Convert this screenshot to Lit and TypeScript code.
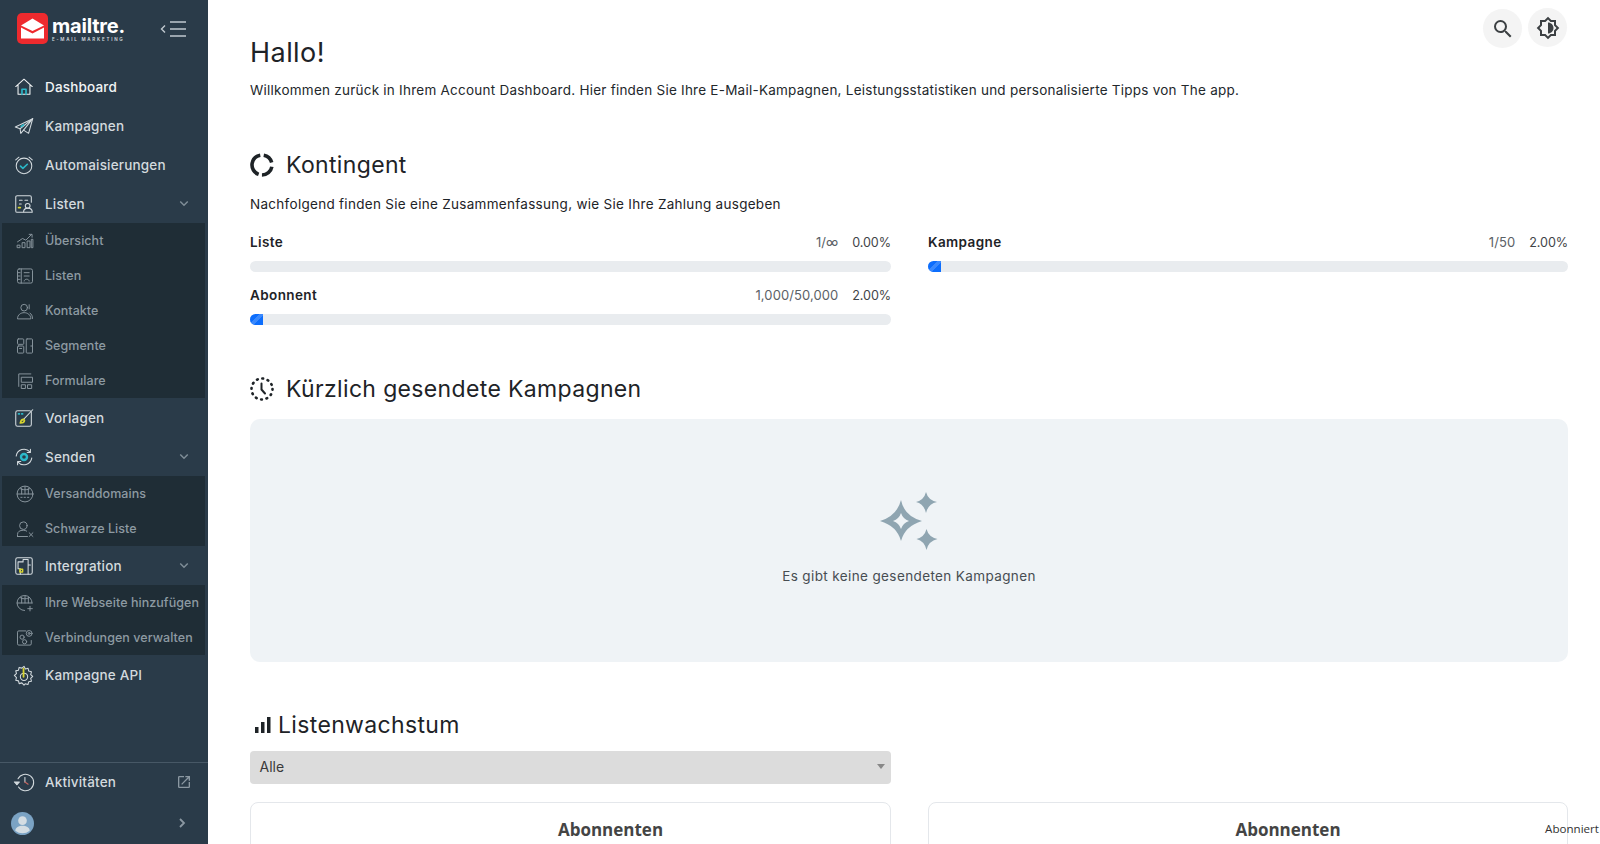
import { LitElement, html, svg, css } from "lit";
import { customElement } from "lit/decorators.js";

const T = "#2bb8c9";
const Y = "#d6d32f";
const icons: Record<string, unknown> = {
  home: svg`<path d="M3 11.5 12 3.5l9 8M5.5 10v10h13V10"/><path d="M9.8 20v-5.5h4.4V20" stroke="${T}" stroke-width="1.8"/>`,
  send: svg`<path d="M2.5 13 21.5 4 17 20l-5.5-3.5L8.5 20l-.8-5z"/><path d="M7.7 15 21.5 4 11.5 16.5"/><path d="M9 12.5l2.5-1.8" stroke="${T}" stroke-width="1.8"/>`,
  alarm: svg`<circle cx="12" cy="13" r="8.5"/><path d="M3 6.5 6.5 3.5M21 6.5l-3.5-3"/><path d="M8.2 13.2l2.6 2.4 4.8-4.4" stroke="${T}" stroke-width="1.8"/>`,
  lists: svg`<path d="M11 21H4.5A1.5 1.5 0 0 1 3 19.500V4.500A1.500 1.500 0 0 1 4.500 3h14A1.500 1.500 0 0 1 20 4.500V10"/><path d="M7 8h3M13 8h3M7 12h2"/><circle cx="16" cy="14" r="2.600"/><path d="M11.500 21c0-6 9.500-6 9.500 0z"/><path d="M6 16h2" stroke="${Y}" stroke-width="1.800"/>`,
  chart: svg`<path d="M3 20h3v-3H3zM9 20h3v-6H9zM15 20h3v-8h-3zM20 20h1.500V10H20zM3 13l6-4 4 2 7-7M17 4h3.500v3.500"/>`,
  listbook: svg`<rect x="3" y="3.500" width="18" height="17" rx="2"/><path d="M7.500 3.500v17M11 8h6M11 12h6M4 8h2M4 12h2M4 16h2M11 18c0-3 6-3 6 0"/>`,
  contact: svg`<circle cx="11" cy="8" r="4"/><path d="M3 21c0-9.500 16-9.500 16 0zM17 4.500v5M21 21c0-3-1-5-3-6.500"/>`,
  segment: svg`<rect x="3" y="3.500" width="7.500" height="6.500" rx="1"/><rect x="3" y="12" width="7.500" height="8.500" rx="1"/><rect x="13.500" y="3.500" width="7.500" height="17" rx="1"/><path d="M5.500 15h2.500M19 12h2"/>`,
  form: svg`<path d="M19 3.500H4.500v15M8 7.500h13v6H8zM8 16.500h4.500v4.500H8zM15.500 16.500H20v4.500h-4.500z"/>`,
  tmpl: svg`<rect x="3" y="4" width="17" height="17" rx="2"/><path d="M21.500 3 11 14"/><path d="M11.500 13.500c-1 0-3 1-3.500 4 3 0 4.500-1.500 4.500-3z" stroke="${Y}" stroke-width="1.800"/><path d="M6 7.500h1M9.500 7.500h1" stroke="${T}" stroke-width="1.800"/>`,
  sendc: svg`<circle cx="12" cy="12" r="3.300" stroke="${T}" stroke-width="2.600"/><path d="M3.500 11A8.600 8.600 0 0 1 18.500 6.500M20.500 13a8.600 8.600 0 0 1-15 4.500"/><path d="M15.500 7h3.500V3.500M8.500 17H5v3.500"/>`,
  domain: svg`<circle cx="12" cy="12" r="9.500"/><path d="M2.500 12h19M6 5.500c0 2 12 2 12 0M8 12V5M12 12V3M16 12V5"/><path d="M7 16h1.500M11 16h1.500M15 16h1.500"/>`,
  block: svg`<circle cx="10" cy="8" r="4.500"/><path d="M3 21v-2.500C3 15 6 13.500 10 13.500c1.500 0 3 .3 4 1M3 21h12M17 16.500l4.500 4.500M21.500 16.500 17 21"/>`,
  integ: svg`<rect x="3" y="3" width="18" height="18" rx="2"/><path d="M8 21v-6H5.500V7.500h5.500V5h5.500v6H19M16.500 11v10"/><rect x="7.500" y="15.500" width="3" height="3" stroke="${Y}" stroke-width="1.600"/>`,
  webadd: svg`<path d="M20.500 12a9 9 0 1 0-9 9M2.500 12h18M6 5.500c0 2 11 2 11 0M8 12V5M12 12V3M16 12V5M18 16v5.500M15.300 18.800h5.500"/>`,
  conn: svg`<path d="M13 3.500H4.500A1.500 1.500 0 0 0 3 5v14a1.500 1.500 0 0 0 1.500 1.500H18a1.500 1.500 0 0 0 1.500-1.500v-4"/><circle cx="17" cy="6.500" r="3.500"/><circle cx="17" cy="6.500" r="1.200"/><circle cx="8.500" cy="11" r="2.500"/><circle cx="11.500" cy="16.500" r="2.500"/>`,
  api: svg`<path d="M12 2.500l1.500 3 3-.8.6 3 3 .8-.8 3 2.200 2-2.200 2.300.8 3-3 .6-.8 3-3-.8L12 23l-2.300-2.400-3 .8-.7-3-3-.6.8-3-2.300-2.300 2.300-2-.8-3 3-.8.7-3 3 .8z"/><circle cx="12" cy="14" r="4"/><path d="M11.500 14V5" stroke="${Y}" stroke-width="2"/>`,
  hist: svg`<path d="M5.500 8.500A9 9 0 1 1 6 17.500"/><path d="M1.500 12H7l-2.700 3z" fill="currentColor"/><path d="M13 7v5" /><path d="M13 12l3.500 2.500" stroke="#c9655f"/>`,
};

const Ico = (n: string) =>
  html`<svg class="ico" viewBox="0 0 24 24" fill="none" stroke="currentColor" stroke-width="1.150" stroke-linecap="round" stroke-linejoin="round">${icons[n]}</svg>`;
const Chev = html`<svg class="chev" viewBox="0 0 12 8" fill="none" stroke="currentColor" stroke-width="1.800"><path d="M1.500 1.500 6 6l4.500-4.500"/></svg>`;

type Item = { icon: string; label: string; arrow?: boolean; active?: boolean; sub?: { icon: string; label: string }[] };
const nav: Item[] = [
  { icon: "home", label: "Dashboard", active: true },
  { icon: "send", label: "Kampagnen" },
  { icon: "alarm", label: "Automaisierungen" },
  {
    icon: "lists",
    label: "Listen",
    arrow: true,
    sub: [
      { icon: "chart", label: "Übersicht" },
      { icon: "listbook", label: "Listen" },
      { icon: "contact", label: "Kontakte" },
      { icon: "segment", label: "Segmente" },
      { icon: "form", label: "Formulare" },
    ],
  },
  { icon: "tmpl", label: "Vorlagen" },
  {
    icon: "sendc",
    label: "Senden",
    arrow: true,
    sub: [
      { icon: "domain", label: "Versanddomains" },
      { icon: "block", label: "Schwarze Liste" },
    ],
  },
  {
    icon: "integ",
    label: "Intergration",
    arrow: true,
    sub: [
      { icon: "webadd", label: "Ihre Webseite hinzufügen" },
      { icon: "conn", label: "Verbindungen verwalten" },
    ],
  },
  { icon: "api", label: "Kampagne API" },
];

const quotas = [
  { label: "Liste", count: "1/∞", pct: "0.00%", fill: 0 },
  { label: "Kampagne", count: "1/50", pct: "2.00%", fill: 2 },
  { label: "Abonnent", count: "1,000/50,000", pct: "2.00%", fill: 2 },
];

@customElement("app-root")
export class AppRoot extends LitElement {
  static styles = css`
    :host {
      display: block;
      height: 844px;
      overflow: hidden;
      font-family: Inter, "Noto Sans", sans-serif;
      color: #1e2327;
      background: #fff;
    }
    .layout { display: flex; height: 844px; }
    .side {
      width: 208px;
      flex: none;
      background: #2a3b49;
      display: flex;
      flex-direction: column;
      color: #d3dade;
    }
    .brand {
      height: 67px;
      flex: none;
      display: flex;
      align-items: flex-start;
      padding: 13px 0 0 17px;
      box-sizing: border-box;
    }
    .logo { width: 31px; height: 31px; flex: none; }
    .word { margin-left: 4px; color: #fff; display: flex; flex-direction: column; }
    .word b { font-size: 20px; line-height: 22px; font-weight: 700; letter-spacing: -0.2px; margin-top: 2px; }
    .word span { font-size: 4.5px; line-height: 6px; letter-spacing: 1.75px; font-weight: 600; color: #d5dbdf; white-space: nowrap; }
    .toggle { margin: 6px 21px 0 auto; width: 27px; height: 20px; color: #c0c9cf; }
    .row {
      height: 39px;
      display: flex;
      align-items: center;
      padding-left: 13px;
      padding-right: 19px;
      gap: 10px;
      font-size: 13.5px;
      font-weight: 500;
      letter-spacing: 0.18px;
      white-space: nowrap;
    }
    .row.on { color: #f1f4f5; }
    .ico { width: 22px; height: 22px; flex: none; }
    .chev { width: 10px; height: 7px; margin-left: auto; color: #7f8d97; }
    .sub {
      background: #1f2d36;
      margin: 0 3px 0 2px;
      color: #8d9aa2;
    }
    .subrow {
      height: 35px;
      display: flex;
      align-items: center;
      padding-left: 12px;
      gap: 10px;
      font-size: 12.5px;
      font-weight: 500;
      white-space: nowrap;
      letter-spacing: 0.05px;
    }
    .subrow .ico { width: 20px; height: 20px; color: #8a979f; margin-left: 1px; }
    .sub-group { display: flex; flex-direction: column; }
    .foot { margin-top: auto; border-top: 1px solid #475866; }
    .foot .row { padding-bottom: 2px; box-sizing: border-box; }
    .foot .ext { width: 16px; height: 16px; margin-left: auto; color: #8b98a2; margin-right: -3px; }
    .user { height: 42px; display: flex; align-items: center; padding: 0 22px 0 11px; box-sizing: border-box; }
    .avatar { width: 23px; height: 23px; }
    .user .right { width: 8px; height: 10px; margin-left: auto; color: #8b98a2; }

    .main { flex: 1; min-width: 0; padding: 0 32px 0 42px; position: relative; }
    .top { display: flex; justify-content: space-between; align-items: flex-start; }
    .top h1 { margin: 35px 0 0; font-size: 27px; line-height: 36px; font-weight: 400; letter-spacing: 0.45px; }
    .btns { display: flex; gap: 6px; margin: 9px 1px 0 0; }
    .btn { width: 39px; height: 39px; border-radius: 50%; background: #f4f4f4; display: flex; align-items: center; justify-content: center; }
    .btn + .btn { margin-top: -1px; }
    .btn svg { width: 24px; height: 24px; fill: #3c4043; }
    .lead { margin: 8px 0 0; font-size: 13.5px; line-height: 22px; letter-spacing: 0.24px; color: #23282c; }
    .sec {
      display: flex;
      align-items: center;
      font-size: 23px;
      line-height: 36px;
      font-weight: 400;
      margin: 0;
      letter-spacing: 0.35px;
    }
    .sec svg { width: 24px; height: 24px; margin-right: 12px; flex: none; }
    .h-quota { margin-top: 46px; }
    .note { margin: 10px 0 0; font-size: 13.5px; line-height: 22px; letter-spacing: 0.29px; }
    .grid { display: grid; grid-template-columns: 641px 640px; column-gap: 37px; }
    .quotas { margin-top: 16px; row-gap: 12px; }
    .q-head { display: flex; align-items: center; height: 22px; font-size: 13px; color: #5b6166; letter-spacing: 0.08px; }
    .q-head b { font-weight: 600; color: #1e2327; font-size: 13.5px; margin-right: auto; letter-spacing: 0.4px; }
    .q-head span + span { margin-left: 14px; color: #3f4448; font-size: 12.6px; letter-spacing: -0.1px; }
    .bar { height: 11px; border-radius: 6px; background: #e9ecef; overflow: hidden; margin-top: 8px; }
    .fill {
      height: 100%;
      min-width: 0;
      background: linear-gradient(135deg, #0d6efd 0 40%, #3a89fd 40% 62%, #0d6efd 62%);
    }
    .h-recent { margin-top: 46px; }
    .empty {
      margin-top: 12px;
      height: 243px;
      background: #eff3f6;
      border-radius: 10px;
      display: flex;
      flex-direction: column;
      align-items: center;
      padding-top: 70px;
      box-sizing: border-box;
      font-size: 13.5px;
      color: #474d52;
      letter-spacing: 0.38px;
    }
    .empty svg { width: 60px; height: 65px; fill: #8fa5b1; margin-bottom: 14px; }
    .h-growth { margin-top: 45px; }
    .h-growth svg { width: 24px; height: 24px; margin: 0 4px 0 0; fill: #1e2327; }
    .select {
      margin-top: 8px;
      width: 641px;
      height: 33px;
      background: #dcdcdc;
      border-radius: 4px;
      display: flex;
      align-items: center;
      padding: 0 6px 2px 9.5px;
      box-sizing: border-box;
      font-size: 14px;
      color: #3a3a3a;
    }
    .caret { margin-left: auto; width: 0; height: 0; border-left: 4px solid transparent; border-right: 4px solid transparent; border-top: 5px solid #888; }
    .cards { margin-top: 18px; }
    .card {
      height: 120px;
      border: 1px solid #e4e7eb;
      border-radius: 8px;
      box-sizing: border-box;
      background: #fff;
      position: relative;
      padding: 15px 0 0 80px;
      text-align: center;
      font-family: "Open Sans", sans-serif;
      font-weight: 700;
      font-size: 17px;
      line-height: 24px;
      color: #444;
    }
    .legend {
      position: absolute;
      top: 16px;
      right: -32px;
      font-size: 11.6px;
      line-height: 20px;
      font-weight: 400;
      color: #333;
    }
  `;

  render() {
    return html`<div class="layout">
      <aside class="side">
        <div class="brand">
          <svg class="logo" viewBox="0 0 31 31">
            <rect width="31" height="31" rx="5" fill="#ee2a2e" />
            <path d="M4 12.500 15.500 5.500 27 12.500 15.500 18z" fill="#fff" />
            <path d="M4 14.500 15.500 20.500 27 14.500V25.500H4z" fill="#fff" />
          </svg>
          <div class="word"><b>mailtre.</b><span>E-MAIL MARKETING</span></div>
          <svg class="toggle" viewBox="0 0 27 20" fill="none" stroke="currentColor" stroke-width="1.400">
            <path d="M5 6.500 1.500 10 5 13.500M10 3h16M10 10h16M10 17h16" />
          </svg>
        </div>
        <nav>
          ${nav.map(
            (n) => html`<div class="row ${n.active ? "on" : ""}">${Ico(n.icon)}<span>${n.label}</span>${n.arrow ? Chev : ""}</div>
              ${n.sub
                ? html`<div class="sub sub-group">
                    ${n.sub.map((s) => html`<div class="subrow">${Ico(s.icon)}<span>${s.label}</span></div>`)}
                  </div>`
                : ""}`,
          )}
        </nav>
        <div class="foot">
          <div class="row">
            ${Ico("hist")}<span>Aktivitäten</span>
            <svg class="ext" viewBox="0 0 24 24" fill="currentColor"><path d="M19 19H5V5h7V3H5a2 2 0 0 0-2 2v14a2 2 0 0 0 2 2h14a2 2 0 0 0 2-2v-7h-2v7zM14 3v2h3.590l-9.830 9.830 1.410 1.410L19 6.410V10h2V3h-7z" /></svg>
          </div>
          <div class="user">
            <svg class="avatar" viewBox="0 0 24 24">
              <circle cx="12" cy="12" r="12" fill="#7ba3c4" />
              <circle cx="12" cy="9" r="4.500" fill="#d4dde3" />
              <path d="M4.500 19.500c0-7 15-7 15 0a12 12 0 0 1-15 0z" fill="#d4dde3" />
            </svg>
            <svg class="right" viewBox="0 0 8 10" fill="none" stroke="currentColor" stroke-width="1.800"><path d="M2 1l4 4-4 4" /></svg>
          </div>
        </div>
      </aside>
      <main class="main">
        <div class="top">
          <h1>Hallo!</h1>
          <div class="btns">
            <div class="btn">
              <svg viewBox="0 0 24 24"><path d="M15.500 14h-.790l-.280-.270A6.470 6.470 0 0 0 16 9.500 6.500 6.500 0 1 0 9.500 16c1.610 0 3.090-.590 4.230-1.570l.270.280v.790l5 4.990L20.490 19l-4.990-5zm-6 0C7.010 14 5 11.990 5 9.500S7.010 5 9.500 5 14 7.010 14 9.500 11.990 14 9.500 14z" /></svg>
            </div>
            <div class="btn">
              <svg viewBox="0 0 24 24"><path d="M20 15.310 23.310 12 20 8.690V4h-4.690L12 .69 8.690 4H4v4.690L.69 12 4 15.310V20h4.690L12 23.310 15.310 20H20v-4.690zM18 14.480V18h-3.520L12 20.480 9.520 18H6v-3.520L3.520 12 6 9.520V6h3.520L12 3.520 14.480 6H18v3.520L20.480 12 18 14.480zM12 6.500v11c3.030 0 5.500-2.470 5.500-5.500S15.030 6.500 12 6.500z" /></svg>
            </div>
          </div>
        </div>
        <p class="lead">Willkommen zurück in Ihrem Account Dashboard. Hier finden Sie Ihre E-Mail-Kampagnen, Leistungsstatistiken und personalisierte Tipps von The app.</p>

        <h2 class="sec h-quota">
          <svg viewBox="0 0 24 24" fill="none" stroke="#1e2327" stroke-width="3.600">
            <circle cx="12" cy="12" r="10" pathLength="360" stroke-dasharray="65 25 80 20 150 20" transform="rotate(-80 12 12)" />
          </svg>Kontingent
        </h2>
        <p class="note">Nachfolgend finden Sie eine Zusammenfassung, wie Sie Ihre Zahlung ausgeben</p>
        <div class="grid quotas">
          ${quotas.map(
            (q) => html`<div>
              <div class="q-head"><b>${q.label}</b><span>${q.count}</span><span>${q.pct}</span></div>
              <div class="bar"><div class="fill" style="width:${q.fill}%"></div></div>
            </div>`,
          )}
        </div>

        <h2 class="sec h-recent">
          <svg viewBox="0 0 24 24" fill="none" stroke="#1e2327" stroke-width="2.600" stroke-linecap="round">
            <circle cx="12" cy="12" r="10.500" stroke-dasharray="0.800 4.700" />
            <path d="M11.500 6.500v6l3.500 4" stroke-width="2" />
          </svg>Kürzlich gesendete Kampagnen
        </h2>
        <div class="empty">
          <svg viewBox="40 20 60 65">
            <path fill-rule="evenodd" d="M62 31Q65 47 83 52 66 57 62 72 58 57 41 52 58 47 62 31ZM62 44Q60 50 54 52 60 54 62 60 64 54 70 52 64 50 62 44Z" />
            <path d="M87 23Q89 31 98 33 89 35 87 44 85 35 77 33 85 31 87 23Z" />
            <path d="M87.500 60Q89.500 68 98.500 70 89.500 72 87.500 81 85.500 72 77.500 70 85.500 68 87.500 60Z" />
          </svg>
          Es gibt keine gesendeten Kampagnen
        </div>

        <h2 class="sec h-growth">
          <svg viewBox="0 0 24 24"><path d="M17 4h3.500v16H17zM5 14h3.500v6H5zm6-5h3.500v11H11z" /></svg>Listenwachstum
        </h2>
        <div class="select">Alle<span class="caret"></span></div>
        <div class="grid cards">
          <div class="card">Abonnenten</div>
          <div class="card">Abonnenten<span class="legend">Abonniert</span></div>
        </div>
      </main>
    </div>`;
  }
}
